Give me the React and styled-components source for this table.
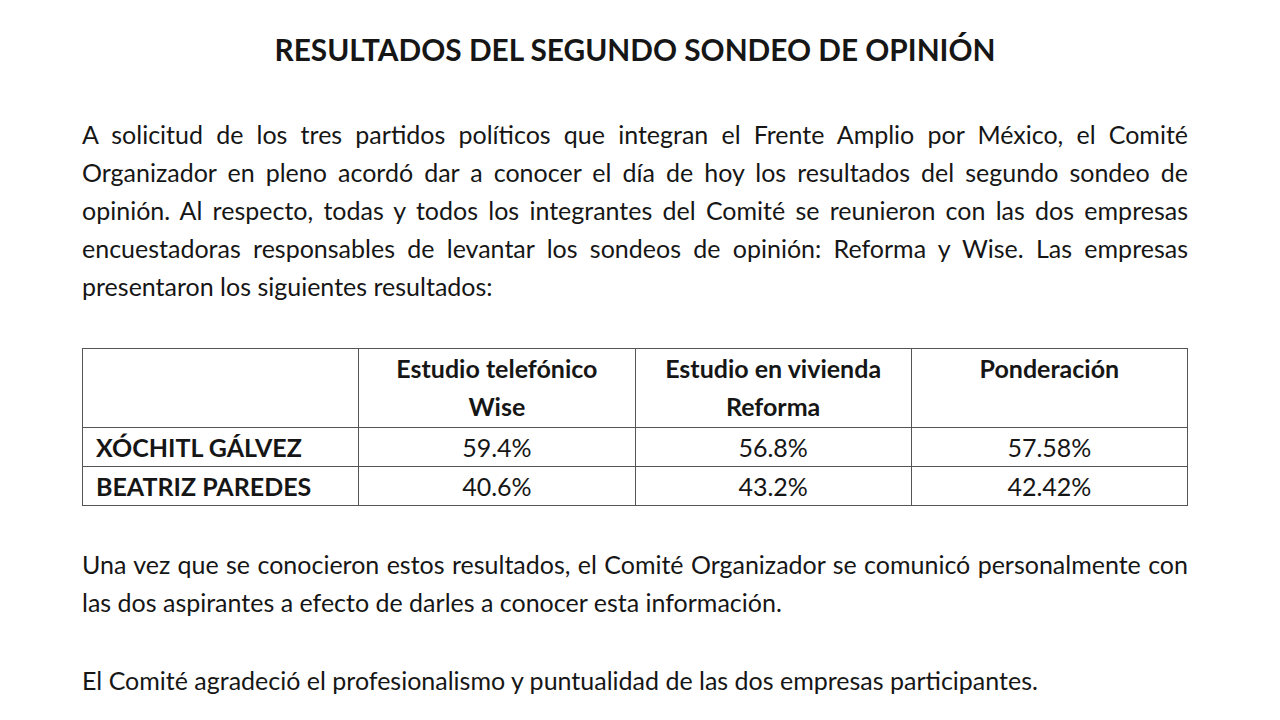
import React from 'react';
import styled, { createGlobalStyle } from 'styled-components';

const GlobalStyle = createGlobalStyle`
    html, body {
        margin: 0;
        padding: 0;
        background: #fff;
    }
    body {
        font-family: Lato, "Liberation Sans", sans-serif;
        color: #161616;
    }
`;

const Page = styled.div`
    width: 1106px;
    padding: 29px 92px 0 82px;
`;

const Title = styled.h1`
    margin: 0 0 44px;
    text-align: center;
    font-size: 29.8px;
    font-weight: 700;
    line-height: 42px;
`;

const Paragraph = styled.div`
    margin: 0 0 ${(p) => p.gap || 0}px;
    font-size: 25px;
    line-height: 38px;
`;

// each printed line is its own box, spread edge to edge like the justified original
const Line = styled.div`
    white-space: nowrap;
    text-align: ${(p) => (p.last ? 'left' : 'justify')};
    text-align-last: ${(p) => (p.last ? 'left' : 'justify')};
`;

const Table = styled.table`
    width: 100%;
    table-layout: fixed;
    border-collapse: collapse;
    margin: 0 0 39px;
    font-size: 25px;

    td, th {
        border: 1.5px solid #555;
        padding: 0 13px;
        line-height: 38px;
    }
`;

const HeadCell = styled.th`
    height: 78px;
    vertical-align: top;
    font-weight: 700;
    text-align: center;
`;

const NameCell = styled.td`
    font-weight: 700;
    text-align: left;
    height: 38px;
`;

const ValueCell = styled.td`
    text-align: center;
`;

const intro = [
    'A solicitud de los tres partidos políticos que integran el Frente Amplio por México, el Comité',
    'Organizador en pleno acordó dar a conocer el día de hoy los resultados del segundo sondeo de',
    'opinión. Al respecto, todas y todos los integrantes del Comité se reunieron con las dos empresas',
    'encuestadoras responsables de levantar los sondeos de opinión: Reforma y Wise. Las empresas',
    'presentaron los siguientes resultados:',
];

const closing = [
    'Una vez que se conocieron estos resultados, el Comité Organizador se comunicó personalmente con',
    'las dos aspirantes a efecto de darles a conocer esta información.',
];

const rows = [
    { name: 'XÓCHITL GÁLVEZ', values: ['59.4%', '56.8%', '57.58%'] },
    { name: 'BEATRIZ PAREDES', values: ['40.6%', '43.2%', '42.42%'] },
];

const Lines = ({ lines }) =>
    lines.map((l, i) => (
        <Line key={i} last={i === lines.length - 1}>{l}</Line>
    ));

export default function App() {
    return (
        <Page>
            <GlobalStyle />
            <Title>RESULTADOS DEL SEGUNDO SONDEO DE OPINIÓN</Title>
            <Paragraph gap={43}>
                <Lines lines={intro} />
            </Paragraph>
            <Table>
                <thead>
                    <tr>
                        <HeadCell></HeadCell>
                        <HeadCell>Estudio telefónico<br />Wise</HeadCell>
                        <HeadCell>Estudio en vivienda<br />Reforma</HeadCell>
                        <HeadCell>Ponderación</HeadCell>
                    </tr>
                </thead>
                <tbody>
                    {rows.map((r) => (
                        <tr key={r.name}>
                            <NameCell>{r.name}</NameCell>
                            {r.values.map((v, i) => (
                                <ValueCell key={i}>{v}</ValueCell>
                            ))}
                        </tr>
                    ))}
                </tbody>
            </Table>
            <Paragraph gap={40}>
                <Lines lines={closing} />
            </Paragraph>
            <Paragraph>
                <Lines lines={['El Comité agradeció el profesionalismo y puntualidad de las dos empresas participantes.']} />
            </Paragraph>
        </Page>
    );
}
